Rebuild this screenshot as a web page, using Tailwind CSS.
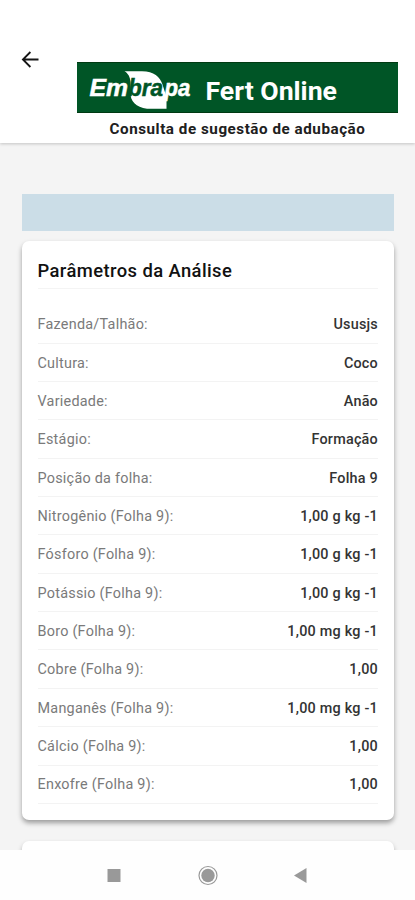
<!DOCTYPE html>
<html lang="pt-BR">
<head>
<meta charset="utf-8">
<meta name="viewport" content="width=device-width, initial-scale=1">
<title>Embrapa Fert Online</title>
<script src="https://cdn.jsdelivr.net/npm/@tailwindcss/browser@4"></script>
</head>
<body class="bg-white">
<div class="flex h-[900px] w-[415px] flex-col overflow-hidden bg-[#f4f4f4] font-[Roboto,sans-serif]">
  <header class="z-10 flex h-[143px] shrink-0 bg-white shadow-[0_1px_3px_rgba(0,0,0,0.2)]">
    <button class="ml-[21px] mt-[50px] h-[19px] w-[19px]" aria-label="Voltar">
      <svg class="block" width="19" height="19" viewBox="0 0 19 19" fill="none" stroke="#151515" stroke-width="1.8"><path d="M17.5 9.5H2M9.4 2L1.9 9.5L9.4 17"/></svg>
    </button>
    <div class="ml-9 mt-[62px] flex w-[323px] flex-col items-center">
      <svg class="block h-[51px] w-[323px] shrink-0" viewBox="0 0 323 51">
        <rect x="1" width="321" height="51" fill="#005526"/>
        <path d="M1 .5H322M1 50.5H322" stroke="#003a12"/>
        <path d="M48.5 9.3H66C78 9.5 84 15 86.5 22.5L90.5 35V46.7H71C60 45.5 54 39 54.5 30.5V20C54 14.5 52 11.5 48.5 9.3Z" fill="#fff"/>
        <g font-family="Liberation Sans, Arial, sans-serif" font-size="24.5" font-weight="700" font-style="italic" stroke-width=".5">
          <text x="13.5" y="34.3" textLength="38.5" lengthAdjust="spacingAndGlyphs" fill="#fff" stroke="#fff">Em</text>
          <text x="52" y="34.3" textLength="35" lengthAdjust="spacingAndGlyphs" fill="#005526" stroke="#005526">bra</text>
          <text x="88.5" y="34.3" textLength="26" lengthAdjust="spacingAndGlyphs" fill="#fff" stroke="#fff">pa</text>
        </g>
        <text x="129.5" y="37.5" textLength="131.5" lengthAdjust="spacingAndGlyphs" font-family="Roboto, sans-serif" font-size="26.5" font-weight="700" fill="#fff">Fert Online</text>
      </svg>
      <p class="mt-[6px] whitespace-nowrap text-[15.2px] leading-[20px] font-bold tracking-[0.54px] text-[#202020]">Consulta de sugestão de adubação</p>
    </div>
  </header>
  <main class="flex min-h-0 flex-1 flex-col overflow-hidden px-[21.5px] pt-[51px]">
    <div class="h-[36.5px] shrink-0 bg-[#cbdde7]"></div>
    <section class="mt-[10.5px] h-[579px] shrink-0 rounded-[7px] bg-white px-4 shadow-[0_3px_5px_rgba(0,0,0,0.36)]">
      <h1 class="h-[48px] border-b border-[#f4f4f4] pt-[17.5px] text-[18.4px] leading-[24px] font-medium tracking-[0.41px] text-[#111]">Parâmetros da Análise</h1>
      <dl id="rows" class="mt-[16.2px]"></dl>
    </section>
    <section class="mt-[21px] h-20 shrink-0 rounded-[7px] bg-white shadow-[0_3px_5px_rgba(0,0,0,0.28)]"></section>
  </main>
  <nav class="z-10 h-[50px] shrink-0 bg-[#fefefe]">
    <svg class="block" width="415" height="50" viewBox="0 0 415 50" fill="#999">
      <rect x="107.5" y="19" width="13" height="13"/>
      <circle cx="208" cy="25.5" r="9" fill="none" stroke="#999" stroke-width="1.2"/>
      <circle cx="208" cy="25.5" r="6.7"/>
      <path d="M294 25.5L306.5 18V33Z"/>
    </svg>
  </nav>
</div>
<script>
const rows = [
  ["Fazenda/Talhão:", "Ususjs"],
  ["Cultura:", "Coco"],
  ["Variedade:", "Anão"],
  ["Estágio:", "Formação"],
  ["Posição da folha:", "Folha 9"],
  ["Nitrogênio (Folha 9):", "1,00 g kg -1"],
  ["Fósforo (Folha 9):", "1,00 g kg -1"],
  ["Potássio (Folha 9):", "1,00 g kg -1"],
  ["Boro (Folha 9):", "1,00 mg kg -1"],
  ["Cobre (Folha 9):", "1,00"],
  ["Manganês (Folha 9):", "1,00 mg kg -1"],
  ["Cálcio (Folha 9):", "1,00"],
  ["Enxofre (Folha 9):", "1,00"]
];
document.getElementById("rows").innerHTML = rows.map(([label, value]) =>
  `<div class="flex h-[38.37px] items-center justify-between border-b border-[#f3f3f3] pt-[2.6px] text-[14.4px] leading-[20px]"><dt class="tracking-[0.25px] text-[#7a7a7a]">${label}</dt><dd class="-mr-[0.5px] font-medium tracking-[0.22px] text-[#333]">${value}</dd></div>`
).join("");
</script>
</body>
</html>
